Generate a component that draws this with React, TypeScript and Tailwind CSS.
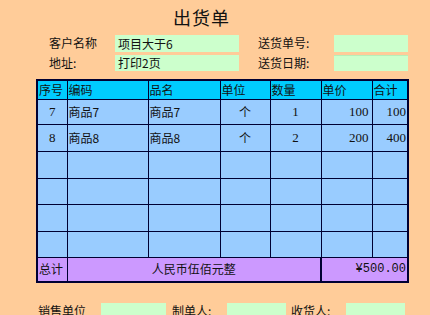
const cjk = "font-['SimSun','Noto_Sans_CJK_SC',sans-serif]";
const serifNum = "font-['Liberation_Serif','Noto_Sans_CJK_SC',serif]";

const rows = [
  { no: '7', code: '商品7', name: '商品7', unit: '个', qty: '1', price: '100', total: '100' },
  { no: '8', code: '商品8', name: '商品8', unit: '个', qty: '2', price: '200', total: '400' },
];

const heights = ['h-[25px]', 'h-[27px]', 'h-[27px]', 'h-[26px]', 'h-[27px]', 'h-[26px]'];

const td = 'border border-[#000033] p-0 leading-none';

export default function App() {
  return (
    <div className={`w-[430px] h-[315px] overflow-hidden bg-[#FFCC99] text-[12px] text-[#111] ${cjk}`}>
      {/* 标题 */}
      <div className="pl-[173px] pt-[7px] h-[34px] text-[18px] leading-[20px] tracking-[1px]">出货单</div>

      {/* 客户信息 */}
      <div className="flex items-center h-[18px]">
        <div className="ml-[49px] w-[66px]">客户名称</div>
        <div className="w-[124px] h-[17px] bg-[#CCFFCC] pl-[3px] leading-[17px]">项目大于6</div>
        <div className="ml-[19px] w-[76px]">送货单号:</div>
        <div className="w-[74px] h-[17px] bg-[#CCFFCC]" />
      </div>
      <div className="flex items-center h-[18px] mt-[2px]">
        <div className="ml-[49px] w-[66px]">地址:</div>
        <div className="w-[124px] h-[16px] bg-[#CCFFCC] pl-[3px] leading-[16px]">打印2页</div>
        <div className="ml-[19px] w-[76px]">送货日期:</div>
        <div className="w-[74px] h-[16px] bg-[#CCFFCC] border-t border-[#b8eeb8]" />
      </div>

      {/* 明细表 */}
      <table className="ml-[36px] mt-[7px] border-collapse table-fixed w-[371px] border-2 border-[#000033]">
        <colgroup>
          <col className="w-[30px]" />
          <col className="w-[81px]" />
          <col className="w-[72px]" />
          <col className="w-[50px]" />
          <col className="w-[51px]" />
          <col className="w-[51px]" />
          <col className="w-[36px]" />
        </colgroup>
        <thead>
          <tr className="h-[19px] bg-[#00CCFF]">
            {['序号', '编码', '品名', '单位', '数量', '单价', '合计'].map((h) => (
              <td key={h} className={`${td} pl-[1px] text-left`}>{h}</td>
            ))}
          </tr>
        </thead>
        <tbody className="bg-[#99CCFF]">
          {heights.map((h, i) => {
            const r = rows[i];
            return (
              <tr key={i} className={h}>
                <td className={`${td} text-center ${serifNum} text-[13px]`}>{r?.no}</td>
                <td className={`${td} pl-[1px]`}>{r?.code}</td>
                <td className={`${td} pl-[1px]`}>{r?.name}</td>
                <td className={`${td} text-center`}>{r?.unit}</td>
                <td className={`${td} text-center ${serifNum} text-[13px]`}>{r?.qty}</td>
                <td className={`${td} text-right pr-[3px] ${serifNum} text-[13px]`}>{r?.price}</td>
                <td className={`${td} text-right pr-[1px] ${serifNum} text-[13px]`}>{r?.total}</td>
              </tr>
            );
          })}
          <tr className="h-[25px] bg-[#CC99FF]">
            <td className={`${td} pl-[1px]`}>总计</td>
            <td colSpan={4} className={`${td} text-center border-r-2`}>人民币伍佰元整</td>
            <td colSpan={2} className={`${td} text-right pr-[1px] font-['Liberation_Mono',monospace] text-[12px]`}>¥500.00</td>
          </tr>
        </tbody>
      </table>

      {/* 签字栏 */}
      <div className="flex items-center h-[18px] mt-[19px]">
        <div className="ml-[38px] w-[63px]">销售单位</div>
        <div className="w-[65px] h-[16px] bg-[#CCFFCC]" />
        <div className="ml-[6px] w-[55px]">制单人:</div>
        <div className="w-[59px] h-[16px] bg-[#CCFFCC]" />
        <div className="ml-[5px] w-[55px]">收货人:</div>
        <div className="w-[59px] h-[16px] bg-[#CCFFCC]" />
      </div>
    </div>
  );
}
